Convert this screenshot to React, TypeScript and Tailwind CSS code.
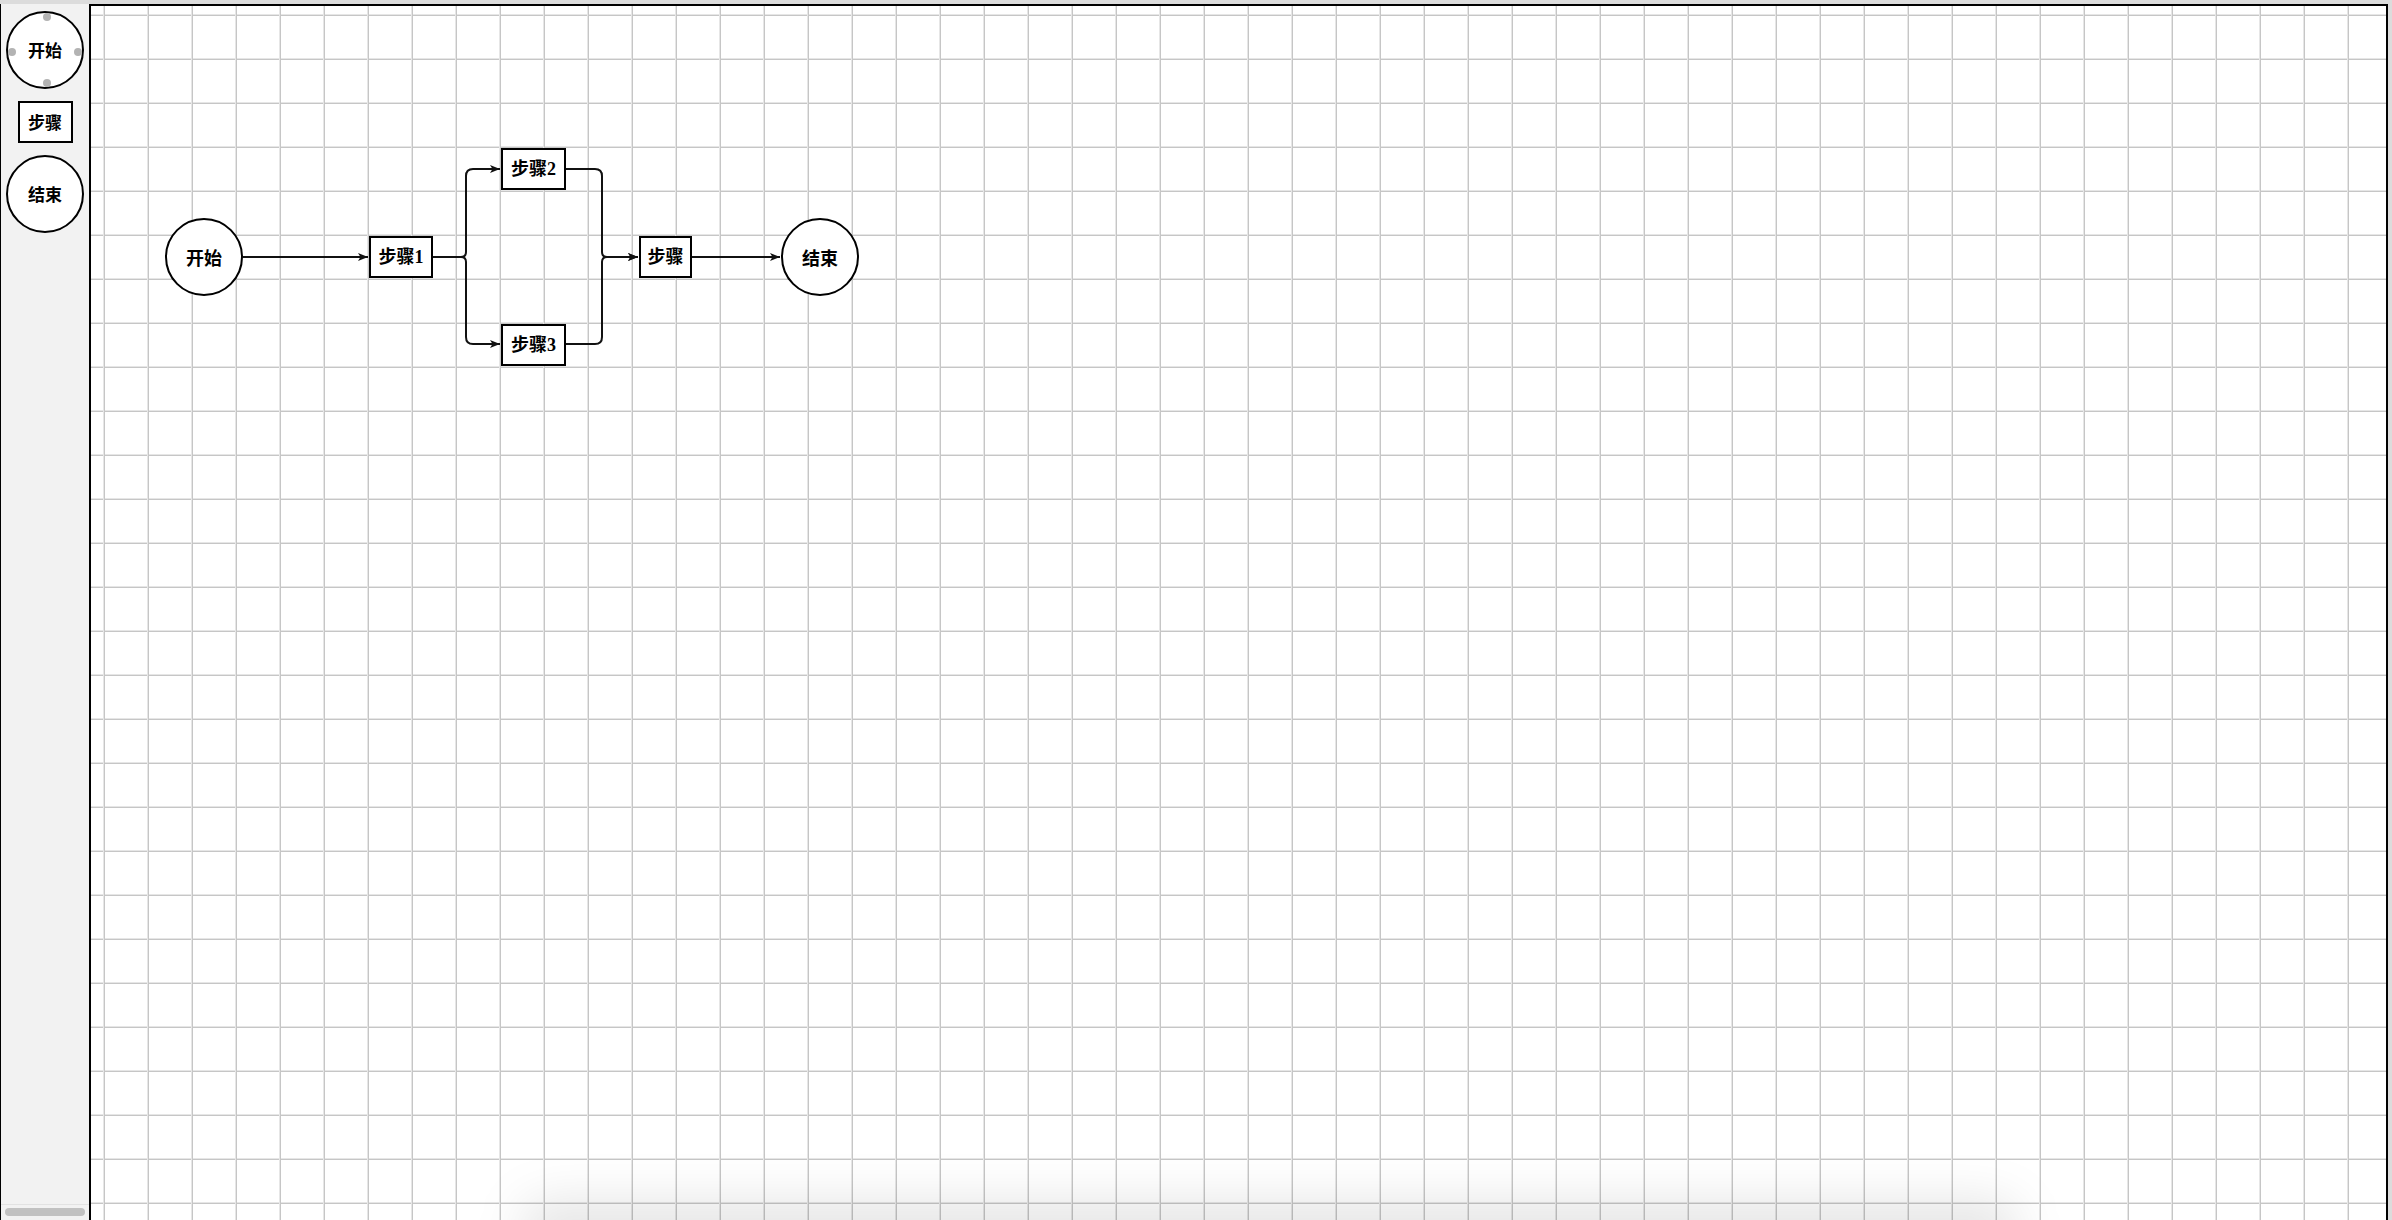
import React from "react";

const cjk = "font-['Noto_Sans_CJK_SC',sans-serif]";
const boxFont = "font-['Liberation_Serif','Noto_Sans_CJK_SC',serif]";

function Palette() {
  return (
    <div className="w-[89px] shrink-0 h-full border-l border-black bg-[#f2f2f2] flex flex-col items-center">
      <div className="relative mt-[7px] w-[78px] h-[78px] rounded-full border-2 border-black bg-white flex items-center justify-center">
        <span className={`${cjk} text-[17px] font-semibold text-black`}>开始</span>
        <span className="absolute left-[35px] top-0 w-[8px] h-[8px] rounded-full bg-[#b3b3b3]" />
        <span className="absolute left-[35px] bottom-0 w-[8px] h-[8px] rounded-full bg-[#b3b3b3]" />
        <span className="absolute left-0 top-[35px] w-[8px] h-[8px] rounded-full bg-[#b3b3b3]" />
        <span className="absolute right-0 top-[35px] w-[8px] h-[8px] rounded-full bg-[#b3b3b3]" />
      </div>
      <div className="mt-[12px] w-[55px] h-[42px] border-2 border-black bg-white flex items-center justify-center">
        <span className={`${cjk} text-[17px] font-semibold text-black`}>步骤</span>
      </div>
      <div className="mt-[12px] w-[78px] h-[78px] rounded-full border-2 border-black bg-white flex items-center justify-center">
        <span className={`${cjk} text-[17px] font-semibold text-black`}>结束</span>
      </div>
      <div className="flex-1" />
      <div className="w-full h-px bg-[#e2e2e2]" />
      <div className="w-[80px] h-[8px] rounded-full bg-[#c1c1c1] mt-[3px] mb-[4px]" />
    </div>
  );
}

function CircleNode({ label, className }: { label: string; className: string }) {
  return (
    <div
      className={`absolute w-[78px] h-[78px] rounded-full border-2 border-black bg-white flex items-center justify-center ${className}`}
    >
      <span className={`${cjk} text-[18px] font-semibold text-black`}>{label}</span>
    </div>
  );
}

function StepNode({ label, className }: { label: string; className: string }) {
  return (
    <div
      className={`absolute h-[42px] border-2 border-black bg-white flex items-center justify-center ${className}`}
    >
      <span className={`${boxFont} text-[18px] font-bold text-black`}>{label}</span>
    </div>
  );
}

function Edges() {
  // drawn in page coordinates, shifted to the canvas origin
  return (
    <svg className="absolute left-0 top-0" width="900" height="420">
      <defs>
        <marker
          id="arrow"
          markerWidth="10"
          markerHeight="8"
          refX="10"
          refY="4"
          orient="auto"
          markerUnits="userSpaceOnUse"
        >
          <path d="M0,0 L10,4 L0,8 L2.5,4 z" fill="#111" />
        </marker>
      </defs>
      <g transform="translate(-91,-6)" fill="none" stroke="#111" strokeWidth="2">
        <path d="M243 257 H368" markerEnd="url(#arrow)" />
        <path d="M433 257 H461 Q466 257 466 252 V176 Q466 169 473 169 H500" markerEnd="url(#arrow)" />
        <path d="M433 257 H461 Q466 257 466 262 V337 Q466 344 473 344 H500" markerEnd="url(#arrow)" />
        <path d="M566 169 H595 Q602 169 602 176 V252 Q602 257 607 257 H638" markerEnd="url(#arrow)" />
        <path d="M566 344 H595 Q602 344 602 337 V262 Q602 257 607 257 H638" markerEnd="url(#arrow)" />
        <path d="M692 257 H780" markerEnd="url(#arrow)" />
      </g>
    </svg>
  );
}

export default function App() {
  return (
    <div className="relative w-[2392px] h-[1220px] overflow-hidden bg-[#dcdcdc] pt-[4px] flex">
      <Palette />
      <div className="relative flex-1 mr-[4px] border-t-2 border-x-2 border-black bg-white bg-[linear-gradient(to_right,#e6e6e6_0,#e6e6e6_1px,#c6c6c6_1px,#c6c6c6_2px,transparent_2px),linear-gradient(to_bottom,#e6e6e6_0,#e6e6e6_1px,#c6c6c6_1px,#c6c6c6_2px,transparent_2px)] bg-[size:44px_44px] bg-[position:12px_8px]">
        <Edges />
        <CircleNode label="开始" className="left-[74px] top-[212px]" />
        <StepNode label="步骤1" className="left-[278px] top-[230px] w-[64px]" />
        <StepNode label="步骤2" className="left-[410px] top-[142px] w-[65px]" />
        <StepNode label="步骤3" className="left-[410px] top-[318px] w-[65px]" />
        <StepNode label="步骤" className="left-[548px] top-[230px] w-[53px]" />
        <CircleNode label="结束" className="left-[690px] top-[212px]" />
      </div>
      {/* soft shadow along the bottom edge */}
      <div className="absolute left-[520px] w-[1500px] -bottom-[40px] h-[60px] rounded-full bg-black/10 blur-xl pointer-events-none" />
    </div>
  );
}
